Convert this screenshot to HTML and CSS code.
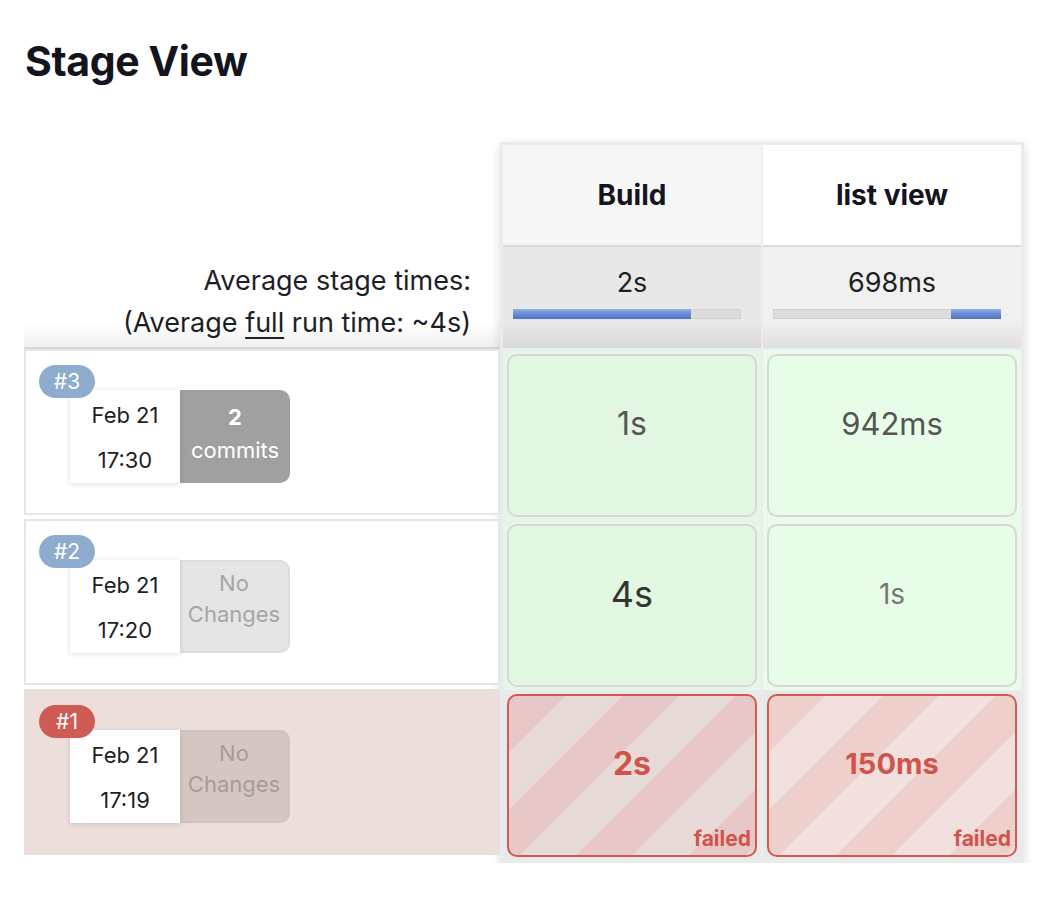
FILE: index.html
```html
<!DOCTYPE html>
<html>
<head>
<meta charset="utf-8">
<link rel="stylesheet" href="styles.css">
</head>
<body>
<h1 class="title">Stage View</h1>
<div class="stage-view">
  <div class="runs">
    <div class="runs-head"></div>
    <div class="avg-label">
      <div>Average stage times:</div>
      <div>(Average <span class="full">full</span> run time: ~4s)</div>
    </div>
    <div class="run">
      <span class="badge">#3</span>
      <div class="run-info">
        <div class="date"><div>Feb 21</div><div>17:30</div></div>
        <div class="changes commits"><div class="count">2</div><div>commits</div></div>
      </div>
    </div>
    <div class="run">
      <span class="badge">#2</span>
      <div class="run-info">
        <div class="date"><div>Feb 21</div><div>17:20</div></div>
        <div class="changes none"><div>No</div><div>Changes</div></div>
      </div>
    </div>
    <div class="run run-failed">
      <span class="badge badge-failed">#1</span>
      <div class="run-info">
        <div class="date"><div>Feb 21</div><div>17:19</div></div>
        <div class="changes none"><div>No</div><div>Changes</div></div>
      </div>
    </div>
  </div>
  <div class="stages">
    <div class="stage-col col-build">
      <div class="stage-head">Build</div>
      <div class="stage-avg">
        <div class="avg-time">2s</div>
        <div class="bar"><div class="fill" style="width:78%"></div></div>
      </div>
      <div class="cell-wrap ok"><div class="cell ok"><span class="dur">1s</span></div></div>
      <div class="cell-wrap ok"><div class="cell ok"><span class="dur dur-big">4s</span></div></div>
      <div class="cell-wrap fail"><div class="cell failed"><span class="dur">2s</span><span class="failed-label">failed</span></div></div>
    </div>
    <div class="stage-col col-list">
      <div class="stage-head">list view</div>
      <div class="stage-avg">
        <div class="avg-time">698ms</div>
        <div class="bar bar-right"><div class="fill" style="width:22%"></div></div>
      </div>
      <div class="cell-wrap ok"><div class="cell ok"><span class="dur dur-mid">942ms</span></div></div>
      <div class="cell-wrap ok"><div class="cell ok"><span class="dur dur-small">1s</span></div></div>
      <div class="cell-wrap fail"><div class="cell failed"><span class="dur dur-fail-sm">150ms</span><span class="failed-label">failed</span></div></div>
    </div>
  </div>
</div>
</body>
</html>
```
FILE: styles.css
```css
* { box-sizing: border-box; }
body {
  margin: 0;
  background: #fff;
  font-family: Inter, "Noto Sans", "Liberation Sans", sans-serif;
  color: #14141f;
}
.title {
  margin: 37px 0 0 25px;
  font-size: 41px;
  line-height: 48px;
  font-weight: 700;
  letter-spacing: -0.4px;
}
.stage-view {
  display: flex;
  margin: 57px 0 0 24px;
}
.runs {
  width: 476px;
  display: flex;
  flex-direction: column;
}
.runs-head { height: 103px; }
.avg-label {
  height: 104px;
  padding: 15px 29px 0 0;
  text-align: right;
  font-size: 27px;
  line-height: 42px;
  color: #1e1e28;
  background: linear-gradient(to bottom, #fff 0, #fff 78px, #efeff0 102px);
  border-bottom: 2px solid #d6d6d6;
}
.full { text-decoration: underline; text-underline-offset: 5px; text-decoration-thickness: 2px; }
.run {
  position: relative;
  height: 166px;
  margin-bottom: 4px;
  border: 2px solid #e6e6e6;
  background: #fff;
  padding: 39px 0 0 44px;
}
.run-failed { background: #ecdeda; border-color: #e8e0de; }
.badge {
  position: absolute;
  left: 13px;
  top: 14px;
  z-index: 2;
  width: 56px;
  height: 33px;
  border-radius: 17px;
  background: #8eadce;
  color: #fff;
  font-size: 21px;
  line-height: 33px;
  text-align: center;
}
.badge-failed { background: #cf5c54; }
.run-info { display: flex; }
.date {
  position: relative;
  z-index: 1;
  width: 110px;
  height: 93px;
  padding-top: 3px;
  background: #fff;
  text-align: center;
  font-size: 22px;
  line-height: 45px;
  color: #1e1e24;
  box-shadow: 0 1px 5px rgba(0, 0, 40, 0.14);
}
.changes {
  width: 110px;
  height: 93px;
  text-align: center;
  font-size: 22px;
  border-radius: 0 10px 10px 0;
}
.commits {
  background: #a0a0a0;
  color: #fff;
  padding-top: 11px;
  line-height: 33px;
}
.count { font-weight: 700; }
.none {
  background: #e5e5e5;
  border: 2px solid #dcdcdc;
  border-left: 0;
  color: #a5a5a5;
  padding-top: 6px;
  line-height: 31px;
}
.run-failed .none { background: #d6c6c3; border-color: #d1c2bf; color: #a59c9a; }

.stages {
  display: flex;
  gap: 2px;
  padding: 1px;
  background: #ececee;
  border: 2px solid #eaeaee;
  box-shadow: 0 3px 10px rgba(0, 0, 0, 0.14);
}
.stage-col {
  width: 258px;
  display: flex;
  flex-direction: column;
}
.stage-head {
  height: 100px;
  display: flex;
  align-items: center;
  justify-content: center;
  font-size: 28px;
  font-weight: 700;
  background: #f6f6f6;
}
.col-list .stage-head { background: #fff; }
.stage-avg {
  height: 103px;
  padding-top: 21px;
  border-top: 2px solid #dadada;
  background: linear-gradient(to bottom, #e8e8e8 0, #e8e8e8 75px, #d8d8d8 101px);
}
.col-list .stage-avg { background: linear-gradient(to bottom, #f0f0f0 0, #f0f0f0 75px, #dfdfdf 101px); }
.avg-time {
  text-align: center;
  font-size: 27px;
  line-height: 30px;
  color: #1e1e24;
}
.bar {
  margin: 11px 20px 0 10px;
  height: 10px;
  background: #dcdcdc;
  box-shadow: inset 0 0 0 1px #d2d2d2;
  display: flex;
}
.bar-right { justify-content: flex-end; }
.fill {
  height: 10px;
  background: linear-gradient(to bottom, #95b0e6 0, #6a8ed8 45%, #4e73c6 100%);
}
.cell-wrap {
  height: 170px;
  padding: 4px 4px 3px 4px;
  margin-top: 2px;
}
.cell-wrap + .cell-wrap { margin-top: 0; }
.col-build .cell-wrap.ok { background: #e4f7e4; }
.col-list .cell-wrap.ok { background: #e9fce9; }
.cell-wrap.fail { background: #e9e9ea; }
.cell {
  height: 100%;
  border-radius: 10px;
  border: 2px solid #d6d6d6;
  display: flex;
  flex-direction: column;
  align-items: center;
  padding-top: 48px;
}
.col-build .cell.ok { background: #e2f7e2; }
.col-list .cell.ok { background: #e8fde8; }
.dur {
  font-size: 32px;
  line-height: 40px;
  color: #555;
}
.dur-mid { font-size: 31px; }
.dur-big { font-size: 36px; color: #333; }
.dur-small { font-size: 28px; color: #777; }
.cell.failed {
  border-color: #d4584f;
  background: repeating-linear-gradient(135deg, #e8c8c6 0, #e8c8c6 40px, #e7d9d5 40px, #e7d9d5 80px);
}
.col-list .cell.failed {
  background: repeating-linear-gradient(135deg, #edcfcc 0, #edcfcc 40px, #f1e0dd 40px, #f1e0dd 80px);
}
.cell.failed .dur { font-weight: 700; color: #d0544b; }
.dur-fail-sm { font-size: 29px; }
.failed-label {
  margin-top: auto;
  align-self: flex-end;
  margin-right: 4px;
  margin-bottom: 6px;
  font-size: 21px;
  line-height: 20px;
  font-weight: 700;
  color: #d0544b;
}
```
